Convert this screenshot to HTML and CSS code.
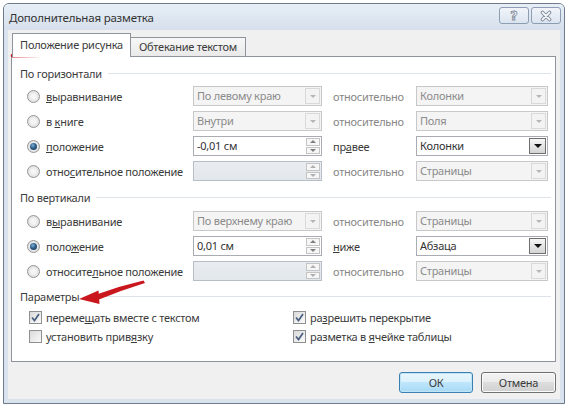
FILE: index.html
```html
<!DOCTYPE html>
<html lang="ru">
<head>
<meta charset="utf-8">
<title>Дополнительная разметка</title>
<link rel="stylesheet" href="styles.css">
</head>
<body>
<div class="dialog">
  <div class="titlebar">
    <span class="title">Дополнительная разметка</span>
    <div class="caption-btns">
      <span class="cbtn help">?</span>
      <span class="cbtn close">
        <svg width="14" height="12" viewBox="0 0 14 12"><path d="M3.5 2.5 L10.5 9.5 M10.5 2.5 L3.5 9.5" stroke="#7a8696" stroke-width="3.6" stroke-linecap="round"/><path d="M3.5 2.5 L10.5 9.5 M10.5 2.5 L3.5 9.5" stroke="#f4f7fa" stroke-width="1.8" stroke-linecap="round"/></svg>
      </span>
    </div>
  </div>
  <div class="client">
    <div class="tabs">
      <div class="tab active">Положение рисунка</div>
      <div class="tab second">Обтекание текстом</div>
    </div>
    <div class="panel">
      <div class="ghead"><span>По горизонтали</span></div>
      <div class="rows">
        <label class="opt"><span class="radio"></span><span><u>в</u>ыравнивание</span></label>
        <div class="combo off"><span class="val">По левому краю</span><span class="arrow"><i></i></span></div>
        <span class="rel dim">относительно</span>
        <div class="combo off"><span class="val">Колонки</span><span class="arrow"><i></i></span></div>

        <label class="opt"><span class="radio"></span><span>в <u>к</u>ниге</span></label>
        <div class="combo off"><span class="val">Внутри</span><span class="arrow"><i></i></span></div>
        <span class="rel dim">относительно</span>
        <div class="combo off"><span class="val">Поля</span><span class="arrow"><i></i></span></div>

        <label class="opt"><span class="radio on"></span><span><u>п</u>оложение</span></label>
        <div class="spin"><span class="val">-0,01 см</span><span class="spinbtn"><b class="up"></b><b class="down"></b></span></div>
        <span class="rel">пр<u>а</u>вее</span>
        <div class="combo"><span class="val">Колонки</span><span class="arrow"><i></i></span></div>

        <label class="opt"><span class="radio"></span><span>отно<u>с</u>ительное положение</span></label>
        <div class="spin off"><span class="val"></span><span class="spinbtn"><b class="up"></b><b class="down"></b></span></div>
        <span class="rel dim">относительно</span>
        <div class="combo off"><span class="val">Страницы</span><span class="arrow"><i></i></span></div>
      </div>

      <div class="ghead g2"><span>По вертикали</span></div>
      <div class="rows r2">
        <label class="opt"><span class="radio"></span><span>в<u>ы</u>равнивание</span></label>
        <div class="combo off"><span class="val">По верхнему краю</span><span class="arrow"><i></i></span></div>
        <span class="rel dim">относительно</span>
        <div class="combo off"><span class="val">Страницы</span><span class="arrow"><i></i></span></div>

        <label class="opt"><span class="radio on"></span><span>поло<u>ж</u>ение</span></label>
        <div class="spin"><span class="val">0,01 см</span><span class="spinbtn"><b class="up"></b><b class="down"></b></span></div>
        <span class="rel"><u>н</u>иже</span>
        <div class="combo"><span class="val">Абзаца</span><span class="arrow"><i></i></span></div>

        <label class="opt"><span class="radio"></span><span>относите<u>л</u>ьное положение</span></label>
        <div class="spin off"><span class="val"></span><span class="spinbtn"><b class="up"></b><b class="down"></b></span></div>
        <span class="rel dim">относительно</span>
        <div class="combo off"><span class="val">Страницы</span><span class="arrow"><i></i></span></div>
      </div>

      <div class="ghead g3"><span>Параметры</span></div>
      <div class="checks">
        <label class="chk"><span class="box"><svg width="11" height="11" viewBox="0 0 11 11"><path d="M2 5.5 L4.5 8.5 L9 2" fill="none" stroke="#4a5f80" stroke-width="1.7"/></svg></span><span>переме<u>щ</u>ать вместе с текстом</span></label>
        <label class="chk"><span class="box"><svg width="11" height="11" viewBox="0 0 11 11"><path d="M2 5.5 L4.5 8.5 L9 2" fill="none" stroke="#4a5f80" stroke-width="1.7"/></svg></span><span>ра<u>з</u>решить перекрытие</span></label>
        <label class="chk"><span class="box"></span><span>установить прив<u>я</u>зку</span></label>
        <label class="chk"><span class="box"><svg width="11" height="11" viewBox="0 0 11 11"><path d="M2 5.5 L4.5 8.5 L9 2" fill="none" stroke="#4a5f80" stroke-width="1.7"/></svg></span><span>разметка в <u>я</u>чейке таблицы</span></label>
      </div>
    </div>
    <div class="footer">
      <button class="btn default">ОК</button>
      <button class="btn cancel">Отмена</button>
    </div>
  </div>
</div>
<svg class="marks" width="567" height="405" viewBox="0 0 567 405">
  <path d="M12.5 55.6 Q60 54.4 127.5 55.2" fill="none" stroke="#d0161c" stroke-width="3.6" stroke-linecap="round"/>
  <path d="M143.5 280.6 L145 283 Q122 290 99 299.5 L96.5 294.5 Q120 286 143.5 280.6 Z" fill="#c9171d"/>
  <path d="M79 299 L98.5 290.5 L99.5 304 Z" fill="#c9171d"/>
</svg>
</body>
</html>
```

FILE: styles.css
```css
* { box-sizing: border-box; }
html, body { margin: 0; padding: 0; }
body {
  width: 567px;
  height: 405px;
  background: #ffffff;
  overflow: hidden;
  position: relative;
  font-family: "Noto Sans", "Open Sans", sans-serif;
  font-size: 11px;
  letter-spacing: -0.25px;
  color: #3b3b3b;
}
u { text-decoration: underline; text-underline-offset: 1px; }

.dialog {
  margin: 3px 0 0 3px;
  width: 562px;
  height: 401px;
  border: 1px solid #6d7b8c;
  border-radius: 6px 6px 0 0;
  background: #d9e3ee;
  display: flex;
  flex-direction: column;
}
.titlebar {
  height: 26px;
  display: flex;
  align-items: center;
  padding-left: 5px;
  background: linear-gradient(#e7eef6, #d6e0ec);
  border-radius: 5px 5px 0 0;
}
.title { flex: 1; font-size: 11.5px; letter-spacing: -0.2px; color: #333; }
.caption-btns { display: flex; gap: 2px; margin-right: 3px; align-self: flex-start; margin-top: 3px; }
.cbtn {
  width: 30px;
  height: 17px;
  border: 1px solid #8d9eb4;
  border-radius: 3px;
  background: linear-gradient(#f1f5fa, #dbe4ef);
  display: flex;
  align-items: center;
  justify-content: center;
}
.help {
  font: bold 13px "DejaVu Sans", sans-serif;
  color: #f4f7fa;
  -webkit-text-stroke: 0.8px #7a8696;
  line-height: 15px;
}

.client {
  flex: 1;
  margin: 0 4px 4px 4px;
  background: #f0f0f0;
  padding: 3px 4px 6px 3px;
  display: flex;
  flex-direction: column;
}
.tabs { display: flex; height: 23px; align-items: flex-end; padding-left: 1px; position: relative; z-index: 1; }
.tab {
  height: 19px;
  border: 1px solid #8f949c;
  border-bottom: none;
  background: linear-gradient(#f7f7f7, #e9e9e9);
  display: flex;
  align-items: center;
  justify-content: center;
  padding-bottom: 1px;
}
.tab.active { width: 119px; height: 24px; margin-bottom: -1px; background: #fff; padding-bottom: 3px; }
.tab.second { width: 115px; border-left: none; }

.panel {
  height: 306px;
  background: #fff;
  border: 1px solid #8f949c;
  padding: 9px 4px 0 8px;
}
.ghead { display: flex; align-items: center; height: 14px; }
.ghead::after { content: ""; flex: 1; height: 1px; background: #dde3e8; margin-left: 6px; }
.g2 { margin-top: 9px; }
.g3 { margin-top: 8px; }

.rows {
  display: grid;
  grid-template-columns: 166px 129px 94px 132px;
  grid-auto-rows: 20px;
  row-gap: 5px;
  margin: 6px 0 0 7px;
  align-items: center;
}
.r2 { margin-top: 7px; }
.opt { display: flex; align-items: center; gap: 6px; }
.radio {
  width: 13px;
  height: 13px;
  border-radius: 50%;
  border: 1px solid #969696;
  background: radial-gradient(circle at 50% 50%, #f6f6f6 25%, #d2d2d2 100%);
  display: flex;
  align-items: center;
  justify-content: center;
}
.radio.on::after {
  content: "";
  width: 7px;
  height: 7px;
  border-radius: 50%;
  background: radial-gradient(circle at 40% 35%, #7fb0d6 0%, #2d5f8a 45%, #1c344c 100%);
}
.rel { padding-left: 11px; }
.rel.dim { color: #878787; }

.combo, .spin {
  height: 20px;
  border: 1px solid #a9acb3;
  display: flex;
  background: #fff;
  color: #333;
}
.combo .val, .spin .val { flex: 1; padding-left: 3px; line-height: 18px; white-space: nowrap; overflow: hidden; }
.combo.off, .spin.off { background: #f4f4f4; border-color: #c8c8c8; color: #8b8b8b; }
.spin.off { background: linear-gradient(#e9edf1, #e2e7ec); border-color: #b7bec8; }
.arrow {
  width: 17px;
  margin: 1px;
  border: 1px solid #6f6f6f;
  background: linear-gradient(#f6f6f6, #d4d4d4);
  display: flex;
  align-items: center;
  justify-content: center;
}
.arrow i {
  width: 0; height: 0;
  border-left: 4px solid transparent;
  border-right: 4px solid transparent;
  border-top: 4px solid #111;
}
.combo.off .arrow { border-color: #d9d9d9; background: #f3f3f3; width: 15px; }
.combo.off .arrow i { border-left-width: 3px; border-right-width: 3px; border-top: 3px solid #b5b5b5; }

.spinbtn { width: 14px; margin: 1px; display: flex; flex-direction: column; gap: 1px; }
.spinbtn b {
  flex: 1;
  border: 1px solid #c4c4c4;
  background: #f6f6f6;
  display: flex;
  align-items: center;
  justify-content: center;
}
.spinbtn b::after {
  content: "";
  width: 0; height: 0;
  border-left: 3px solid transparent;
  border-right: 3px solid transparent;
}
.spinbtn .up::after { border-bottom: 3px solid #7e7e7e; }
.spinbtn .down::after { border-top: 3px solid #7e7e7e; }
.spin.off .spinbtn b::after { border-top-color: #b0b0b0; border-bottom-color: #b0b0b0; }

.checks {
  display: grid;
  grid-template-columns: 264px 1fr;
  grid-auto-rows: 19px;
  margin: 5px 0 0 9px;
  align-items: center;
}
.chk { display: flex; align-items: center; gap: 4px; }
.box {
  width: 13px;
  height: 13px;
  border: 1px solid #8e8f8f;
  background: linear-gradient(135deg, #d9d9d9, #fbfbfb);
  display: flex;
  align-items: center;
  justify-content: center;
}

.footer { display: flex; justify-content: flex-end; gap: 8px; margin-top: 10px; }
.btn {
  height: 21px;
  border-radius: 3px;
  border: 1px solid #707070;
  font: 11px "Noto Sans", "Open Sans", sans-serif;
  letter-spacing: -0.25px;
  color: #3b3b3b;
  padding: 0;
  background: linear-gradient(#f3f3f3 0%, #ebebeb 50%, #dddddd 50%, #d0d0d0 100%);
  box-shadow: inset 0 0 0 1px #fbfbfb;
}
.btn.default {
  width: 74px;
  border-color: #3c7fb1;
  background: linear-gradient(#eaf6fd 0%, #d9f0fc 50%, #bee6fd 50%, #a7d9f5 100%);
  box-shadow: inset 0 0 0 1px #bfe4f6;
}
.btn.cancel { width: 75px; }

.marks { position: absolute; left: 0; top: 0; pointer-events: none; }
```
